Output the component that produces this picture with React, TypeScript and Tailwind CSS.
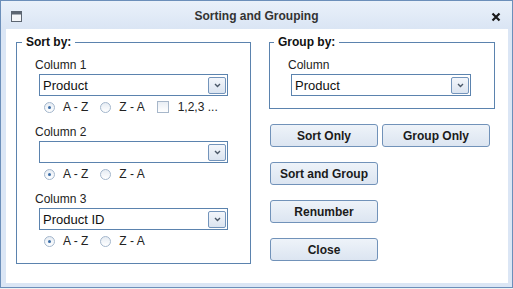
import React from 'react';

const font = "font-['Liberation_Sans',Arial,sans-serif]";

function ChevronButton() {
  return (
    <div className="w-[18px] h-[17px] border border-[#7394bb] rounded-[2px] bg-gradient-to-b from-[#f3f6fb] to-[#dbe4f0] flex items-center justify-center">
      <svg width="7" height="5" viewBox="0 0 7 5">
        <path d="M1 1 L3.5 3.5 L6 1" fill="none" stroke="#4b5868" strokeWidth="1.4" />
      </svg>
    </div>
  );
}

function Select({ value, width }: { value: string; width: string }) {
  return (
    <div className={`${width} h-[22px] border border-[#5b83ae] bg-white flex items-center justify-between pl-[3px] pr-[1px]`}>
      <span className="text-[13px] text-[#111] leading-none">{value}</span>
      <ChevronButton />
    </div>
  );
}

function Radio({ checked, label }: { checked?: boolean; label: string }) {
  return (
    <div className="flex items-center">
      <div className="w-[11px] h-[11px] rounded-full border border-[#a3b6cc] bg-gradient-to-b from-[#e6ecf3] to-white flex items-center justify-center">
        {checked && <div className="w-[3px] h-[3px] rounded-full bg-[#3a6ca6]" />}
      </div>
      <span className="ml-[8px] text-[12px] text-[#222]">{label}</span>
    </div>
  );
}

function Checkbox({ label }: { label: string }) {
  return (
    <div className="flex items-center">
      <div className="w-[12px] h-[12px] border border-[#a7b7ca] bg-gradient-to-b from-[#e9eef4] to-white" />
      <span className="ml-[9px] text-[12px] text-[#222]">{label}</span>
    </div>
  );
}

function SortColumn({ label, value, numeric }: { label: string; value: string; numeric?: boolean }) {
  return (
    <div className="flex flex-col">
      <div className="h-[14px] leading-[14px] text-[12px] text-[#222]">{label}</div>
      <div className="mt-[2px] ml-[4px]">
        <Select value={value} width="w-[189px]" />
      </div>
      <div className="mt-[3px] ml-[9px] h-[16px] flex items-center gap-[12px]">
        <Radio checked label="A - Z" />
        <Radio label="Z - A" />
        {numeric && <Checkbox label="1,2,3 ..." />}
      </div>
    </div>
  );
}

function Btn({ children }: { children: React.ReactNode }) {
  return (
    <button className="w-[108px] h-[23px] border border-[#7192b9] rounded-[3px] bg-gradient-to-b from-[#eef3f9] to-[#dce5f1] text-[12px] font-bold text-[#1b1b1b]">
      {children}
    </button>
  );
}

export default function App() {
  return (
    <div className={`w-[513px] h-[289px] bg-[#f2f2f2] ${font}`}>
      <div className="w-[513px] h-[288px] border border-[#6c8fba] bg-[#dbe6f5] flex flex-col">
        {/* Title bar */}
        <div className="h-[28px] bg-gradient-to-b from-[#eaf1fa] to-[#dae5f4] flex items-center px-[10px]">
          <svg width="11" height="11" viewBox="0 0 11 11" className="mt-[2px]">
            <rect x="0.5" y="0.5" width="10" height="10" fill="#f4f6f9" stroke="#5d6672" />
            <rect x="0.5" y="0.5" width="10" height="3" fill="#5d6672" />
          </svg>
          <div className="flex-1 text-center text-[12px] font-bold text-[#333] mt-[2px]">Sorting and Grouping</div>
          <svg width="10" height="10" viewBox="0 0 10 10" className="mt-[3px] mr-[1px]">
            <path d="M1.5 1.5 L8.5 8.5 M8.5 1.5 L1.5 8.5" stroke="#1a1a1a" strokeWidth="2.2" />
          </svg>
        </div>

        {/* Client area */}
        <div className="flex-1 flex pl-[5px] pr-[4px] pb-[4px]">
          <div className="flex-1 bg-white flex pl-[10px] pt-[6px] gap-[18px]">
            {/* Sort by */}
            <fieldset className="w-[235px] h-[229px] border border-[#5b83ae] p-0 m-0">
              <legend className="ml-[5px] px-[4px] text-[12px] font-bold leading-[14px] text-[#111]">Sort by:</legend>
              <div className="pl-[18px] pt-[9px] flex flex-col gap-[10px]">
                <SortColumn label="Column 1" value="Product" numeric />
                <SortColumn label="Column 2" value="" />
                <SortColumn label="Column 3" value="Product ID" />
              </div>
            </fieldset>

            {/* Right column */}
            <div className="w-[226px] flex flex-col">
              <fieldset className="w-[226px] border border-[#5b83ae] p-0 m-0">
                <legend className="ml-[4px] px-[4px] text-[12px] font-bold leading-[14px] text-[#111]">Group by:</legend>
                <div className="pl-[18px] pt-[9px] pb-[12px] flex flex-col">
                  <div className="h-[14px] leading-[14px] text-[12px] text-[#222]">Column</div>
                  <div className="mt-[2px] ml-[3px]">
                    <Select value="Product" width="w-[180px]" />
                  </div>
                </div>
              </fieldset>

              <div className="mt-[15px] ml-[1px] flex flex-col gap-[15px]">
                <div className="flex gap-[4px]">
                  <Btn>Sort Only</Btn>
                  <Btn>Group Only</Btn>
                </div>
                <Btn>Sort and Group</Btn>
                <Btn>Renumber</Btn>
                <Btn>Close</Btn>
              </div>
            </div>
          </div>
        </div>
      </div>
    </div>
  );
}
